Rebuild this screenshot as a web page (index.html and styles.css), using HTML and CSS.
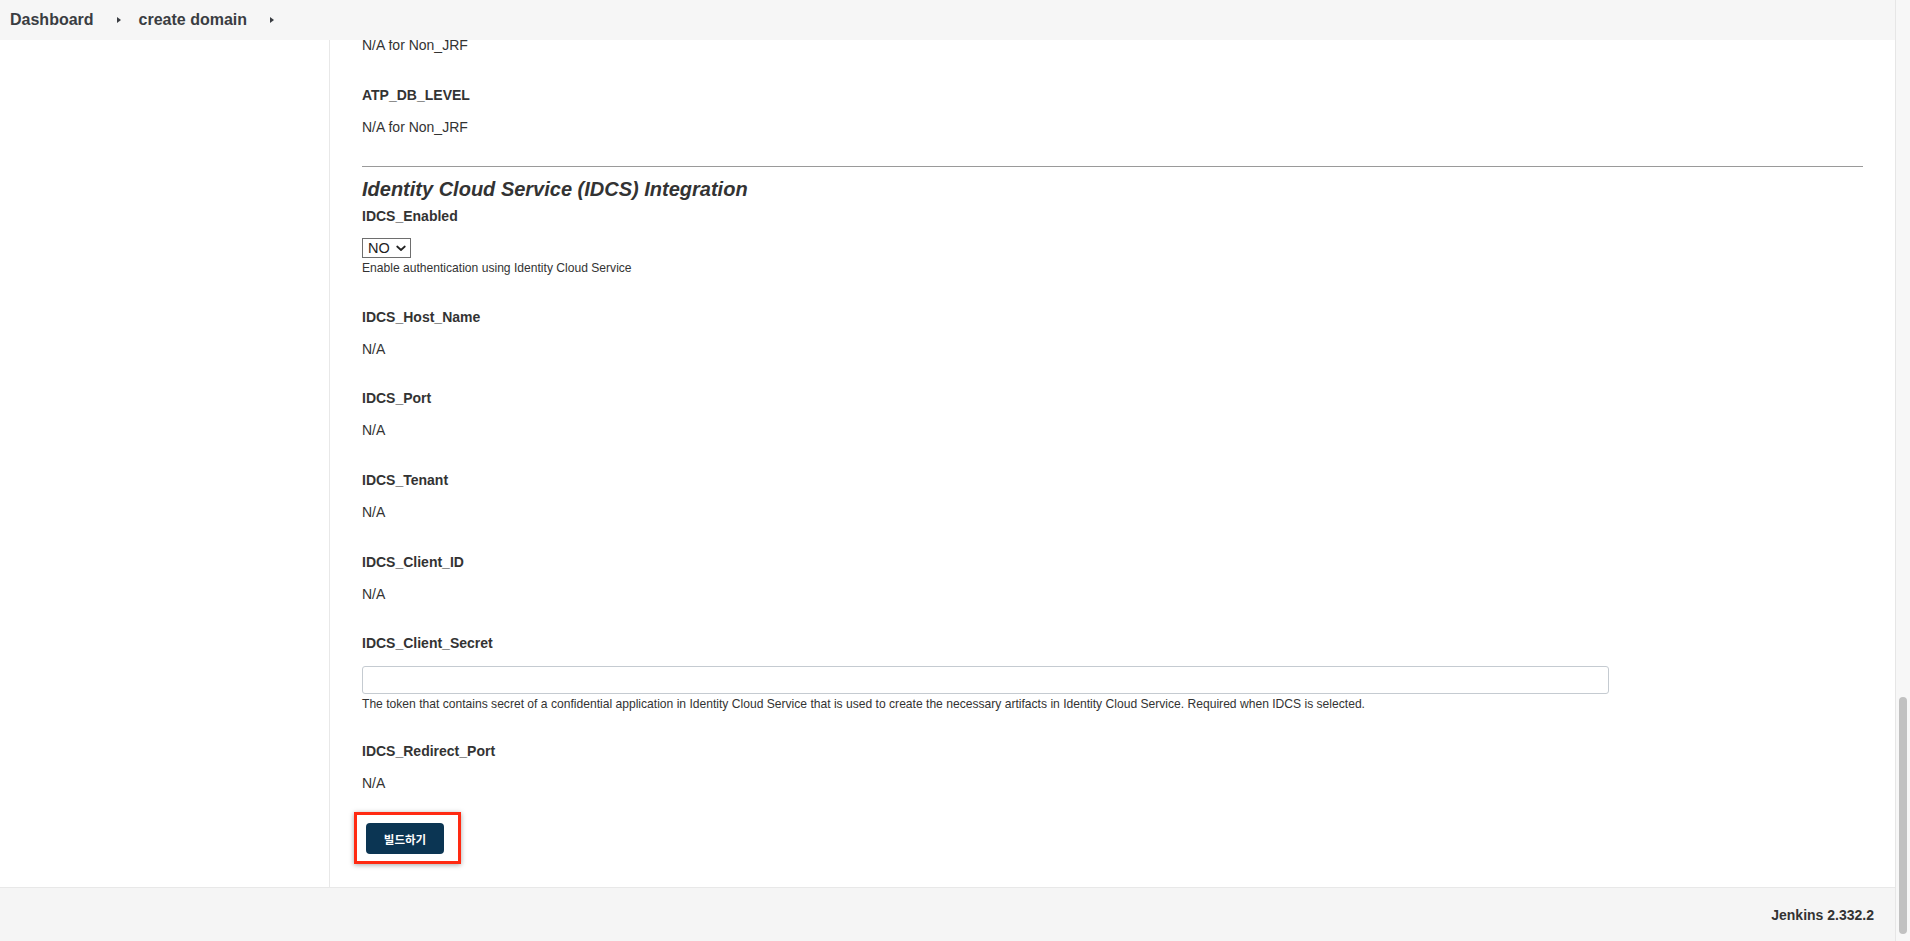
FILE: index.html
```html
<!DOCTYPE html>
<html lang="ko">
<head>
<meta charset="utf-8">
<title>create domain [Jenkins]</title>
<link rel="stylesheet" href="styles.css">
</head>
<body>
<div class="page">
  <div class="main">
    <header class="breadcrumbs">
      <a class="crumb">Dashboard</a><span class="sep"></span><a class="crumb">create domain</a><span class="sep"></span>
    </header>
    <div class="body">
      <aside class="side"></aside>
      <main class="content">
        <div class="value cut">N/A for Non_JRF</div>
        <div class="field">
          <div class="label">ATP_DB_LEVEL</div>
          <div class="value">N/A for Non_JRF</div>
        </div>
        <section class="section">
          <h2 class="section-title">Identity Cloud Service (IDCS) Integration</h2>
          <div class="field enabled">
            <div class="label">IDCS_Enabled</div>
            <div class="select-wrap">
              <select class="select"><option>NO</option><option>YES</option></select>
              <svg class="chev" width="10" height="7" viewBox="0 0 10 7"><path d="M1.2 1.5 L5 5 L8.8 1.5" fill="none" stroke="#222" stroke-width="1.7" stroke-linecap="round" stroke-linejoin="round"/></svg>
            </div>
            <div class="help">Enable authentication using Identity Cloud Service</div>
          </div>
          <div class="field">
            <div class="label">IDCS_Host_Name</div>
            <div class="value">N/A</div>
          </div>
          <div class="field">
            <div class="label">IDCS_Port</div>
            <div class="value">N/A</div>
          </div>
          <div class="field">
            <div class="label">IDCS_Tenant</div>
            <div class="value">N/A</div>
          </div>
          <div class="field">
            <div class="label">IDCS_Client_ID</div>
            <div class="value">N/A</div>
          </div>
          <div class="field secret">
            <div class="label">IDCS_Client_Secret</div>
            <input class="text-input" type="text">
            <div class="help">The token that contains secret of a confidential application in Identity Cloud Service that is used to create the necessary artifacts in Identity Cloud Service. Required when IDCS is selected.</div>
          </div>
          <div class="field last">
            <div class="label">IDCS_Redirect_Port</div>
            <div class="value">N/A</div>
          </div>
        </section>
        <div class="highlight">
          <button class="build-btn" type="button">빌드하기</button>
        </div>
      </main>
    </div>
    <footer class="footer">Jenkins 2.332.2</footer>
  </div>
  <div class="scrollbar"><div class="thumb"></div></div>
</div>
</body>
</html>
```
FILE: styles.css
```css
* { box-sizing: border-box; }
html, body { margin: 0; padding: 0; }
body {
  font-family: "Liberation Sans", Arial, "Noto Sans CJK KR", sans-serif;
  color: #333;
  background: #fff;
  height: 941px;
  overflow: hidden;
}
.page {
  display: flex;
  height: 941px;
}
.main {
  flex: 1;
  display: flex;
  flex-direction: column;
  min-width: 0;
}
.breadcrumbs {
  height: 40px;
  flex: none;
  background: #f6f6f6;
  display: flex;
  align-items: center;
  padding-left: 10px;
}
.crumb {
  font-size: 16px;
  font-weight: bold;
  color: #3a3d42;
  text-decoration: none;
}
.sep {
  width: 0;
  height: 0;
  border-left: 4px solid #3a3d42;
  border-top: 3.5px solid transparent;
  border-bottom: 3.5px solid transparent;
  margin: 0 18px 0 23px;
}
.body {
  flex: 1;
  display: flex;
  min-height: 0;
  overflow: hidden;
}
.side {
  width: 330px;
  flex: none;
  border-right: 1px solid #e8e8e8;
}
.content {
  flex: 1;
  padding: 0 32px;
  overflow: hidden;
}
.label {
  font-size: 14px;
  font-weight: bold;
  line-height: 20px;
  color: #333;
}
.value {
  font-size: 14px;
  line-height: 20px;
  color: #333;
  margin-top: 12px;
}
.cut { margin-top: -5px; }
.field { margin-top: 29.7px; }
.section {
  margin-top: 29px;
  border-top: 1px solid #9a9a9a;
}
.section-title {
  margin: 10px 0 0;
  font-size: 20px;
  line-height: 24px;
  font-weight: bold;
  font-style: italic;
  color: #333;
}
.field.enabled { margin-top: 5px; }
.select-wrap {
  position: relative;
  width: 49px;
  height: 20px;
  margin-top: 12px;
}
.select {
  appearance: none;
  -webkit-appearance: none;
  display: block;
  width: 49px;
  height: 20px;
  margin: 0;
  padding: 0 0 0 5px;
  border: 1px solid #6e6e6e;
  border-radius: 0;
  background: #fff;
  font-family: "Liberation Sans", Arial, sans-serif;
  font-size: 14.5px;
  line-height: 18px;
  color: #222;
}
.chev {
  position: absolute;
  right: 5px;
  top: 7px;
  pointer-events: none;
}
.help {
  font-size: 12.1px;
  line-height: 16px;
  color: #333;
  margin-top: 2px;
}
.field.enabled + .field { margin-top: 31px; }
.text-input {
  display: block;
  width: 1247px;
  height: 28px;
  margin-top: 13px;
  border: 1px solid #c5cbd1;
  border-radius: 3px;
  background: #fff;
  font-size: 14px;
  padding: 0 6px;
}
.secret .help { margin-top: 2px; }
.field.secret + .field { margin-top: 29px; }
.highlight {
  display: inline-block;
  margin: 19px 0 0 -8px;
  border: 3px solid #ff2a12;
  padding: 8px 14px 7px 9px;
  box-shadow: 0 1px 5px rgba(0, 0, 0, 0.35);
}
.build-btn {
  display: block;
  width: 78px;
  height: 31px;
  border: none;
  border-radius: 4px;
  background: #0b3553;
  color: #fff;
  font-family: "Noto Sans CJK KR", "Liberation Sans", sans-serif;
  font-size: 11.5px;
  font-weight: bold;
  padding: 0;
}
.footer {
  height: 54px;
  flex: none;
  background: #f5f5f5;
  border-top: 1px solid #e8e8e8;
  display: flex;
  align-items: center;
  justify-content: flex-end;
  padding-right: 21px;
  font-size: 14px;
  font-weight: bold;
  color: #333;
}
.scrollbar {
  width: 15px;
  flex: none;
  background: #f7f7f7;
  border-left: 1px solid #e6e6e6;
  display: flex;
  flex-direction: column;
  justify-content: flex-end;
  padding: 0 3px 7px 3px;
}
.thumb {
  height: 237px;
  border-radius: 4px;
  background: #c1c1c1;
}
```
